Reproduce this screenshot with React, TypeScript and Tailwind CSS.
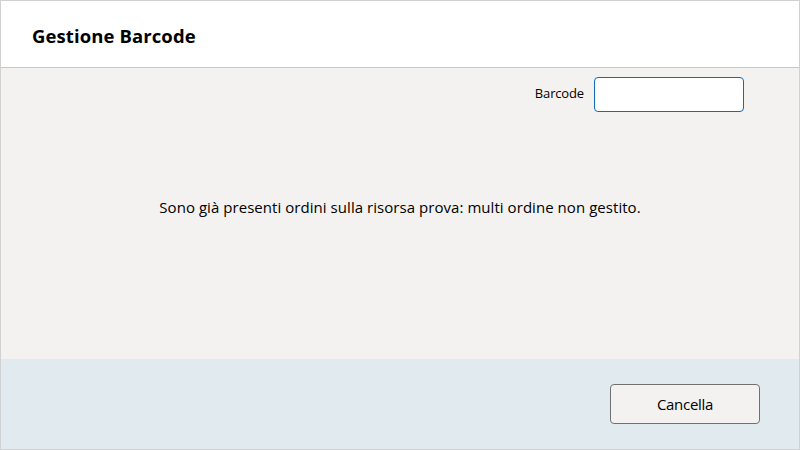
export default function App() {
  return (
    <div
      className="w-[800px] h-[450px] flex flex-col border border-[#d1d1d1] bg-white text-black"
      style={{ fontFamily: '"Open Sans", "Noto Sans", sans-serif' }}
    >
      {/* Header */}
      <div className="h-[67px] shrink-0 flex items-center px-[31px] pt-[3px] border-b border-[#c8c8c8] bg-white">
        <h1 className="text-[18.5px] font-bold tracking-[0.1px]">Gestione Barcode</h1>
      </div>

      {/* Body */}
      <div className="flex-1 flex flex-col bg-[#f3f2f1]">
        <div className="flex justify-end items-center gap-[10px] pt-[9px] pr-[55px]">
          <label className="text-[13px] tracking-[-0.15px] -mt-[2px]">Barcode</label>
          <input
            className="w-[150px] h-[35px] rounded-[4px] border border-[#0f6cbd] bg-white px-2 text-[14px] outline-none"
            type="text"
          />
        </div>
        <div className="flex-1 flex justify-center pt-[84px]">
          <p className="text-[15px] tracking-[0.05px]">
            Sono già presenti ordini sulla risorsa prova: multi ordine non gestito.
          </p>
        </div>
      </div>

      {/* Footer */}
      <div className="h-[90px] shrink-0 flex justify-end items-start pt-[25px] pr-[39px] bg-[#e0eaef]">
        <button className="w-[150px] h-[40px] rounded-[4px] border border-[#707070] bg-[#f3f2f1] text-[15px] tracking-[-0.3px]">
          Cancella
        </button>
      </div>
    </div>
  )
}
